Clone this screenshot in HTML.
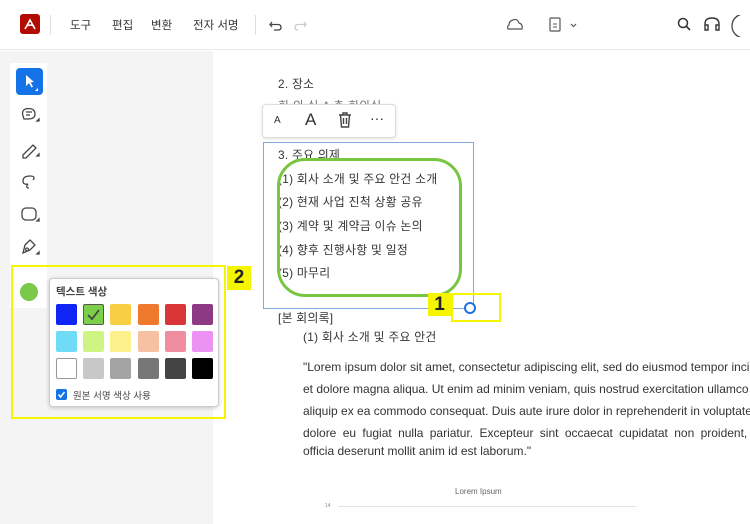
<!DOCTYPE html>
<html><head><meta charset="utf-8"><style>
*{margin:0;padding:0;box-sizing:border-box}
body{width:750px;height:524px;overflow:hidden;background:#fff;font-family:"Liberation Sans","Noto Sans CJK KR",sans-serif;color:#333;position:relative}
.a{position:absolute}
.t{position:absolute;white-space:nowrap}
.menu{font-size:11.5px;color:#333;top:17px}
.sw{position:absolute;width:21px;height:21px;border-radius:2px}
.pt{font-size:11.8px;color:#333;letter-spacing:0.3px}
.lo{font-size:12px;color:#333;left:303px}
</style></head><body>
<!-- top bar -->
<div class="a" style="left:0;top:0;width:750px;height:50px;border-bottom:1px solid #e8e8e8;background:#fff"></div>
<div class="a" style="left:20px;top:14px;width:20px;height:20px;background:#b30b00;border-radius:3px"></div>
<svg class="a" style="left:20px;top:14px" width="20" height="20"><path d="M5 15 L10 6 L15 15 M7 12 Q10 10 14 12" stroke="#fff" stroke-width="1.6" fill="none"/></svg>
<div class="a" style="left:50px;top:15px;width:1px;height:20px;background:#ddd"></div>
<div class="t menu" style="left:70px">도구</div>
<div class="t menu" style="left:112px">편집</div>
<div class="t menu" style="left:151px">변환</div>
<div class="t menu" style="left:193px">전자 서명</div>
<div class="a" style="left:255px;top:15px;width:1px;height:20px;background:#ddd"></div>
<svg class="a" style="left:268px;top:17px" width="40" height="16"><path d="M4 5 L2 7.5 L4 10 M2 7.5 H10 Q13 7.5 13 10.5 Q13 13 10 13 H6" stroke="#444" stroke-width="1.3" fill="none"/><path d="M36 5 L38 7.5 L36 10 M38 7.5 H30 Q27 7.5 27 10.5 Q27 13 30 13" stroke="#ccc" stroke-width="1.3" fill="none"/></svg>
<svg class="a" style="left:505px;top:15px" width="80" height="20"><path d="M3 14 H17 Q18 9 14 8 Q12 3 8 5 Q4 6 4 10 Q2 11 3 14Z" stroke="#555" stroke-width="1.2" fill="none"/><rect x="45" y="3" width="10" height="13" rx="1" stroke="#555" stroke-width="1.2" fill="none"/><path d="M48 9h4M48 12h4" stroke="#555"/><path d="M66 9 L68.5 11.5 L71 9" stroke="#555" stroke-width="1.2" fill="none"/></svg>
<svg class="a" style="left:676px;top:15px" width="74" height="22"><circle cx="7" cy="8" r="4.5" stroke="#333" stroke-width="1.5" fill="none"/><path d="M10.5 11.5 L14 15" stroke="#333" stroke-width="1.6"/><path d="M29 14 V9 Q29 3 36 3 Q43 3 43 9 V14 M29 10 h3 v5 h-3z M43 10 h-3 v5 h3z" stroke="#333" stroke-width="1.4" fill="none"/><rect x="56" y="-1" width="40" height="24" rx="12" stroke="#444" stroke-width="1.3" fill="#fff"/></svg>
<!-- sidebar -->
<div class="a" style="left:0;top:51px;width:213px;height:473px;background:#f4f4f4"></div>
<div class="a" style="left:10px;top:63px;width:37px;height:205px;background:#fff"></div>
<div class="a" style="left:16px;top:68px;width:27px;height:27px;background:#1473e6;border-radius:4px"></div>
<svg class="a" style="left:16px;top:68px" width="27" height="27"><path d="M10 7 L10 18 L13 15 L15.5 19.5 L17 18.7 L14.7 14.3 L18 14Z" fill="#fff"/><path d="M22 20 L22 23 L19 23Z" fill="#fff"/></svg>
<svg class="a" style="left:16px;top:100px" width="27" height="160" fill="none" stroke="#444" stroke-width="1.3">
<path d="M7 16 Q5 9 12 8.5 Q19 8.5 19 14 Q19 19 12 19 L8 19Z"/><path d="M10 12h6M10 15h4"/><path d="M21 21 l2 0 l0 -2z" fill="#444"/>
<path d="M7 55 L17 45 L20 48 L10 58 L7 58Z"/><path d="M21 56 l2 0 l0 -2z" fill="#444"/>
<path d="M17 80 Q20 76 14 76 Q7 76 7 81 Q7 85 12 84 M12 84 Q9 88 13 88"/>
<rect x="6" y="108" width="14" height="12" rx="4"/><path d="M21 121 l2 0 l0 -2z" fill="#444"/>
<path d="M7 153 L9 145 L14 140 L19 145 L14 150Z M11 148 a1.5 1.5 0 1 0 0.1 0"/><path d="M21 154 l2 0 l0 -2z" fill="#444"/>
</svg>
<div class="a" style="left:10px;top:268px;width:37px;height:40px;background:#fff"></div>
<div class="a" style="left:20px;top:283px;width:18px;height:18px;border-radius:50%;background:#7bc94a"></div>
<!-- popup -->
<div class="a" style="left:49px;top:278px;width:170px;height:129px;background:#fff;border:1px solid #ccc;border-radius:4px;box-shadow:0 1px 4px rgba(0,0,0,.2)"></div>
<div class="t" style="left:56px;top:284px;font-size:10.5px;font-weight:bold;color:#444">텍스트 색상</div>
<div class="sw" style="left:56px;top:304px;background:#0f24f5"></div>
<div class="sw" style="left:83px;top:304px;background:#7bd048;border:1px solid #555"></div>
<svg class="a" style="left:83px;top:304px" width="21" height="21"><path d="M5 11 L9 15 L16 6" stroke="#444" stroke-width="1.8" fill="none"/></svg>
<div class="sw" style="left:110px;top:304px;background:#f8cf44"></div>
<div class="sw" style="left:138px;top:304px;background:#ef7a2e"></div>
<div class="sw" style="left:165px;top:304px;background:#d93639"></div>
<div class="sw" style="left:192px;top:304px;background:#8d3a83"></div>
<div class="sw" style="left:56px;top:331px;background:#6fdbf7"></div>
<div class="sw" style="left:83px;top:331px;background:#cef584"></div>
<div class="sw" style="left:110px;top:331px;background:#fdf18e"></div>
<div class="sw" style="left:138px;top:331px;background:#f6c0a3"></div>
<div class="sw" style="left:165px;top:331px;background:#ef8ea0"></div>
<div class="sw" style="left:192px;top:331px;background:#ec92f2"></div>
<div class="sw" style="left:56px;top:358px;background:#fff;border:1px solid #999"></div>
<div class="sw" style="left:83px;top:358px;background:#c8c8c8"></div>
<div class="sw" style="left:110px;top:358px;background:#a4a4a4"></div>
<div class="sw" style="left:138px;top:358px;background:#777"></div>
<div class="sw" style="left:165px;top:358px;background:#444"></div>
<div class="sw" style="left:192px;top:358px;background:#000"></div>
<div class="a" style="left:56px;top:389px;width:11px;height:11px;background:#1473e6;border-radius:2px"></div>
<svg class="a" style="left:56px;top:389px" width="11" height="11"><path d="M2.5 5.5 L4.5 8 L8.5 3" stroke="#fff" stroke-width="1.5" fill="none"/></svg>
<div class="t" style="left:73px;top:388px;font-size:9.5px;color:#444">원본 서명 색상 사용</div>
<!-- yellow box 2 -->
<div class="a" style="left:11px;top:265px;width:215px;height:154px;border:2px solid #f5f500"></div>
<div class="t" style="left:227px;top:266px;width:24px;height:24px;background:#f5f500;font-size:19px;font-weight:bold;color:#222;text-align:center;line-height:24px">2</div>
<!-- page -->
<div class="t pt" style="left:278px;top:75px">2. 장소</div>
<div class="t pt" style="left:278px;top:97px;color:#777">회 의 실 A 층 회의실</div>
<div class="a" style="left:262px;top:104px;width:134px;height:34px;background:#fff;border:1px solid #ddd;border-radius:4px;box-shadow:0 1px 3px rgba(0,0,0,.12)"></div>
<div class="t" style="left:274px;top:115px;font-size:10px;color:#333">A</div>
<div class="t" style="left:305px;top:110px;font-size:17px;color:#333">A</div>
<svg class="a" style="left:337px;top:111px" width="16" height="18"><path d="M2 4h12M6 4V2h4v2M3.5 4 L4.5 16 H11.5 L12.5 4 M6.5 7v6M9.5 7v6" stroke="#444" stroke-width="1.4" fill="none"/></svg>
<div class="t" style="left:370px;top:110px;font-size:14px;color:#333">···</div>
<div class="a" style="left:263px;top:142px;width:211px;height:167px;border:1px solid #7fa9e0"></div>
<div class="t pt" style="left:278px;top:146px">3. 주요 의제</div>
<div class="t pt" style="left:278px;top:170px">(1) 회사 소개 및 주요 안건 소개</div>
<div class="t pt" style="left:278px;top:193px">(2) 현재 사업 진척 상황 공유</div>
<div class="t pt" style="left:278px;top:217px">(3) 계약 및 계약금 이슈 논의</div>
<div class="t pt" style="left:278px;top:241px">(4) 향후 진행사항 및 일정</div>
<div class="t pt" style="left:278px;top:264px">(5) 마무리</div>
<div class="a" style="left:277px;top:158px;width:185px;height:139px;border:3px solid #78c540;border-radius:28px"></div>
<div class="t" style="left:428px;top:293px;width:23px;height:23px;background:#f5f500;font-size:19px;font-weight:bold;color:#222;text-align:center;line-height:23px">1</div>
<div class="a" style="left:451px;top:293px;width:50px;height:29px;border:2px solid #f5f500"></div>
<div class="a" style="left:464px;top:302px;width:12px;height:12px;border:2px solid #1f6fe0;border-radius:50%;background:#fff"></div>
<div class="t pt" style="left:278px;top:309px">[본 회의록]</div>
<div class="t pt" style="left:303px;top:328px">(1)  회사 소개 및 주요 안건</div>
<div class="t lo" style="top:360px">"Lorem ipsum dolor sit amet, consectetur adipiscing elit, sed do eiusmod tempor incididunt</div>
<div class="t lo" style="top:382px">et dolore magna aliqua. Ut enim ad minim veniam, quis nostrud exercitation ullamco</div>
<div class="t lo" style="top:404px">aliquip ex ea commodo consequat. Duis aute irure dolor in reprehenderit in voluptate velit</div>
<div class="t lo" style="top:426px;word-spacing:3px">dolore eu fugiat nulla pariatur. Excepteur sint occaecat cupidatat non proident, sunt</div>
<div class="t lo" style="top:444px">officia deserunt mollit anim id est laborum."</div>
<div class="t" style="left:455px;top:487px;font-size:8px;color:#666">Lorem Ipsum</div>
<div class="t" style="left:325px;top:503px;font-size:5px;color:#888">14</div>
<div class="a" style="left:338px;top:506px;width:298px;height:1px;background:#e4e4e4"></div>
</body></html>
